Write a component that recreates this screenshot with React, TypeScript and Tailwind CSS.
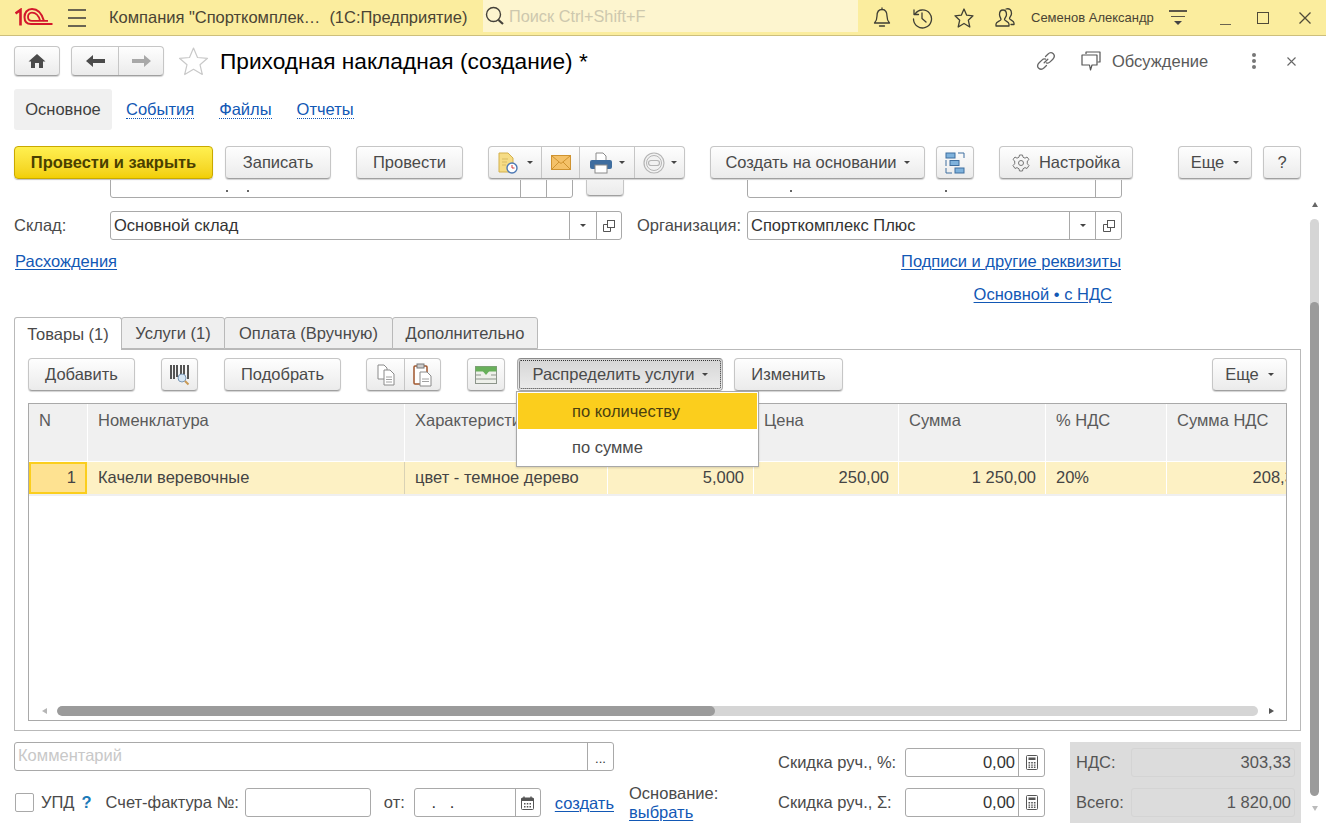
import React from "react";

const Caret = ({ className = "" }: { className?: string }) => (
  <span className={"inline-block w-0 h-0 border-x-[3px] border-x-transparent border-t-[3px] border-t-[#444] " + className} />
);

const btn =
  "flex items-center justify-center h-[33px] shrink-0 rounded-[4px] border border-[#c6c6c6] border-b-[#a0a0a0] bg-linear-to-b from-[#fefefe] to-[#ebebeb] shadow-[0_1px_1px_rgba(0,0,0,0.18)] text-[#4a4a4a] text-[16.5px]";

const Btn = ({ w, children, className = "" }: { w: string; children: React.ReactNode; className?: string }) => (
  <div className={btn + " " + w + " " + className}>{children}</div>
);

const Seg = ({ w, children, last }: { w: string; children: React.ReactNode; last?: boolean }) => (
  <div className={"flex items-center justify-center h-full " + w + (last ? "" : " border-r border-[#c6c6c6]")}>{children}</div>
);

const Link = ({ children, className = "" }: { children: React.ReactNode; className?: string }) => (
  <span className={"text-[16.5px] leading-[18px] text-[#1258b5] underline underline-offset-2 decoration-1 whitespace-nowrap " + className}>{children}</span>
);

const CopySmall = () => (
  <svg width="12" height="12" viewBox="0 0 12 12" fill="none" stroke="#555" strokeWidth="1">
    <rect x="4.5" y="0.5" width="7" height="7" />
    <path d="M4.5 4.5H0.5V11.5H7.5V7.5" />
  </svg>
);

const Calc = () => (
  <svg width="12" height="15" viewBox="0 0 12 15">
    <rect x="0.5" y="0.5" width="11" height="14" rx="1" fill="#fff" stroke="#555" />
    <rect x="2.5" y="2.5" width="7" height="2.5" fill="#555" />
    <path d="M2.5 7h1.6v1.4H2.5zM5.2 7h1.6v1.4H5.2zM7.9 7h1.6v1.4H7.9zM2.5 9.4h1.6v1.4H2.5zM5.2 9.4h1.6v1.4H5.2zM7.9 9.4h1.6v1.4H7.9zM2.5 11.6h1.6V13H2.5zM5.2 11.6h1.6V13H5.2zM7.9 11.6h1.6V13H7.9z" fill="#555" />
  </svg>
);

const Field = ({
  w,
  text,
  segs,
  align = "left",
  className = "",
}: {
  w: string;
  text?: string;
  segs?: { w: string; node: React.ReactNode }[];
  align?: "left" | "right";
  className?: string;
}) => (
  <div className={"flex h-[29px] shrink-0 bg-white rounded-[3px] border border-[#a9a9a9] " + w + " " + className}>
    <div className={"flex-1 min-w-0 px-[3px] text-[16.5px] leading-[27px] text-[#333] whitespace-nowrap " + (align === "right" ? "text-right" : "")}>{text}</div>
    {segs?.map((s, i) => (
      <div key={i} className={"flex items-center justify-center border-l border-[#a9a9a9] " + s.w}>{s.node}</div>
    ))}
  </div>
);

const Logo = () => (
  <svg width="38" height="18" viewBox="0 0 38 18" fill="none" stroke="#d3172b">
    <path d="M0.5 5.5 L5.5 2 V17.5" strokeWidth="2.6" />
    <path d="M29 13 C27 6 23 1 17 1 C12 1 9.5 5 9.5 9 C9.5 13.5 12 16 16 16 H37.5" strokeWidth="2" />
    <path d="M25 12.5 C23.5 7 21 4.6 17 4.6 C14.2 4.6 13 7 13 9 C13 11.5 14.5 12.8 17 12.8 H33" strokeWidth="1.8" />
  </svg>
);

const BarIcon = ({ children, w = 22 }: { children: React.ReactNode; w?: number }) => (
  <svg width={w} height="22" viewBox="0 0 22 22" fill="none" stroke="#3f3f35" strokeWidth="1.3" strokeLinejoin="round" strokeLinecap="round">
    {children}
  </svg>
);

const TopBar = () => (
  <div className="flex items-center h-[36px] bg-[#fbed9e] border-b border-[#cdbf7c] text-[#4a4434] shrink-0">
    <div className="ml-[15px] mt-[-2px]"><Logo /></div>
    <div className="ml-[15px] flex flex-col gap-[6px] w-[18px]">
      <div className="h-[2px] bg-[#6a6552]" />
      <div className="h-[2px] bg-[#6a6552]" />
      <div className="h-[2px] bg-[#6a6552]" />
    </div>
    <div className="ml-[23px] w-[374px] text-[16.5px] whitespace-pre tracking-[-0.02px]">Компания "Спорткомплек…  (1С:Предприятие)</div>
    <div className="flex items-center self-start h-[32px] w-[375px] bg-[#fdf5cf]">
      <svg className="ml-[2px]" width="20" height="20" viewBox="0 0 20 20" fill="none" stroke="#44413a">
        <circle cx="8.5" cy="8.5" r="7" strokeWidth="1.4" />
        <path d="M13.5 14 L18 18" strokeWidth="2.2" />
      </svg>
      <span className="ml-[4px] text-[#cdc8ae] text-[16.3px]">Поиск Ctrl+Shift+F</span>
    </div>
    <div className="ml-[13px]">
      <BarIcon><path d="M11 2.5 C7 2.5 6 6 6 9 C6 12.5 5 14.5 3.5 16 H18.5 C17 14.5 16 12.5 16 9 C16 6 15 2.5 11 2.5Z M11 1V2.5 M8.5 19 H13.5" /></BarIcon>
    </div>
    <div className="ml-[18px]">
      <BarIcon><path d="M4 7 A9 9 0 1 1 2.5 12 M3 3 V7.5 H7.5 M11 6 V11.5 L15 15" /></BarIcon>
    </div>
    <div className="ml-[20px]">
      <BarIcon><path d="M11 2 L13.7 8.2 L20 8.8 L15.3 13.2 L16.8 20 L11 16.5 L5.2 20 L6.7 13.2 L2 8.8 L8.3 8.2 Z" /></BarIcon>
    </div>
    <div className="ml-[19px]">
      <BarIcon><path d="M9 3 C6.5 3 5.5 5 5.5 7.5 C5.5 10 7 11 7 12.5 C7 14 2 14.5 2 17 V19 H15 V17 C15 14.5 10.5 14 10.5 12.5 C10.5 11 12.5 10 12.5 7.5 C12.5 5 11.5 3 9 3Z M12 2 C15.5 1 17.5 3 17.5 6.5 C17.5 9 15.5 10 15.5 11.5 C15.5 13 20 13.5 20 16 V17.5 H17" /></BarIcon>
    </div>
    <div className="ml-[15px] w-[138px] text-[13px] whitespace-nowrap">Семенов Александр</div>
    <div className="flex flex-col items-center w-[18px] gap-[4px]">
      <div className="h-[1.5px] w-[18px] bg-[#5c5646]" />
      <div className="h-[1.5px] w-[14px] bg-[#5c5646]" />
      <Caret className="border-x-[4px] border-t-[4px] border-t-[#5c5646]" />
    </div>
    <div className="ml-[33px] w-[11px] h-[1.5px] bg-[#6a6450] mt-[14px]" />
    <div className="ml-[26px] w-[12px] h-[12px] border-[1.5px] border-[#4f4a38]" />
    <svg className="ml-[30px]" width="12" height="12" viewBox="0 0 12 12" stroke="#4f4a38" strokeWidth="1.3"><path d="M0.5 0.5 L11.5 11.5 M11.5 0.5 L0.5 11.5" /></svg>
  </div>
);

const FormHeader = () => (
  <div className="flex items-center h-[30px] mt-[10px] pl-[14px] shrink-0">
    <div className={btn + " !h-[30px] w-[46px]"}>
      <svg width="18" height="16" viewBox="0 0 18 16" fill="#4b4b4b"><path d="M9 1 L17.5 8.5 H15 V15 H11 V10 H7 V15 H3 V8.5 H0.5 Z" /></svg>
    </div>
    <div className={btn + " !h-[30px] w-[93px] ml-[11px]"}>
      <Seg w="w-[47px]">
        <svg width="19" height="12" viewBox="0 0 19 12" fill="#4b4b4b"><path d="M0 6 L7 0 V4 H19 V8 H7 V12 Z" /></svg>
      </Seg>
      <Seg w="flex-1" last>
        <svg width="19" height="12" viewBox="0 0 19 12" fill="#a8a8a8"><path d="M19 6 L12 0 V4 H0 V8 H12 V12 Z" /></svg>
      </Seg>
    </div>
    <svg className="ml-[14px]" width="31" height="30" viewBox="0 0 31 30" fill="#fff" stroke="#c9c9c9" strokeWidth="1.2" strokeLinejoin="round"><path d="M15.5 2 L19.5 11.5 L29.5 12.3 L22 18.7 L24.3 28.5 L15.5 23.3 L6.7 28.5 L9 18.7 L1.5 12.3 L11.5 11.5 Z" /></svg>
    <div className="ml-[11px] mt-[1px] text-[22.7px] text-black whitespace-nowrap">Приходная накладная (создание) *</div>
    <div className="flex-1" />
    <svg width="20" height="20" viewBox="0 0 22 22" fill="none" stroke="#666" strokeWidth="1.4" strokeLinecap="round">
      <path d="M9 13 L13 9 M10.5 6 L13 3.5 C15 1.5 17.5 1.5 19 3 C20.5 4.5 20.5 7 18.5 9 L15.5 12 C14 13.5 12.5 13.5 11.5 13 M11.5 16 L9 18.5 C7 20.5 4.5 20.5 3 19 C1.5 17.5 1.5 15 3.5 13 L6.5 10 C8 8.5 9.5 8.5 10.5 9" />
    </svg>
    <svg className="ml-[25px]" width="20" height="20" viewBox="0 0 20 20" fill="none" stroke="#555" strokeWidth="1.2" strokeLinejoin="round">
      <path d="M5 3 V1 H19 V11 H16.5" />
      <path d="M1 4 H16 V14 H11 L9.5 19 L8.5 14 H1 Z" />
    </svg>
    <div className="ml-[11px] w-[96px] text-[16.5px] text-[#5a5a5a] whitespace-nowrap">Обсуждение</div>
    <div className="ml-[44px] flex flex-col gap-[2px]">
      <div className="w-[4px] h-[4px] rounded-full bg-[#777]" />
      <div className="w-[4px] h-[4px] rounded-full bg-[#777]" />
      <div className="w-[4px] h-[4px] rounded-full bg-[#777]" />
    </div>
    <svg className="ml-[31px] mr-[30px]" width="9" height="9" viewBox="0 0 9 9" stroke="#666" strokeWidth="1.1"><path d="M0.5 0.5 L8.5 8.5 M8.5 0.5 L0.5 8.5" /></svg>
  </div>
);

const PageTabs = () => (
  <div className="flex items-center h-[41px] mt-[13px] ml-[14px] text-[16.5px] shrink-0">
    <div className="flex items-center justify-center w-[98px] h-full bg-[#f0f0f0] rounded-[3px] text-[#3f3f3f]">Основное</div>
    <span className="ml-[14px] text-[#1258b5] border-b border-dotted border-[#1258b5] leading-[18px]">События</span>
    <span className="ml-[25px] text-[#1258b5] border-b border-dotted border-[#1258b5] leading-[18px]">Файлы</span>
    <span className="ml-[25px] text-[#1258b5] border-b border-dotted border-[#1258b5] leading-[18px]">Отчеты</span>
  </div>
);

const DocClock = () => (
  <svg width="24" height="22" viewBox="0 0 24 22">
    <path d="M2 1 H11 L16 6 V20 H2 Z" fill="#f6dc85" stroke="#d3b04d" />
    <path d="M5 7 H11 M5 10 H10 M5 13 H9" stroke="#d8bb62" />
    <circle cx="15" cy="16" r="5" fill="#fff" stroke="#4d79b5" strokeWidth="1.4" />
    <path d="M15 13 V16 H17.5" stroke="#d23b3b" fill="none" />
  </svg>
);

const Mail = () => (
  <svg width="20" height="15" viewBox="0 0 20 15">
    <rect x="0.5" y="0.5" width="19" height="14" fill="#f4c168" stroke="#cf9330" />
    <path d="M1 1 L10 8.5 L19 1 M1 14 L8 7 M19 14 L12 7" fill="none" stroke="#cf9330" />
  </svg>
);

const Printer = () => (
  <svg width="24" height="22" viewBox="0 0 24 22">
    <path d="M7 1 H14 L17 4 V10 H7 Z" fill="#fff" stroke="#8a8a8a" />
    <rect x="1" y="8" width="22" height="9" rx="2" fill="#3f6d9f" />
    <rect x="6" y="13" width="12" height="8" fill="#fff" stroke="#8a8a8a" />
  </svg>
);

const Stamp = () => (
  <svg width="22" height="22" viewBox="0 0 22 22" fill="none" stroke="#b5b5b5">
    <circle cx="11" cy="11" r="10" fill="#f2f2f2" strokeWidth="1.2" />
    <circle cx="11" cy="11" r="7.5" />
    <rect x="5.5" y="8.5" width="11" height="5" rx="2.5" strokeWidth="1.2" />
  </svg>
);

const Structure = () => (
  <svg width="20" height="22" viewBox="0 0 20 22" fill="none">
    <rect x="1" y="1" width="9" height="5" fill="#7fb2dc" stroke="#3f6f9f" />
    <rect x="5" y="8.5" width="9" height="5" fill="#7fb2dc" stroke="#3f6f9f" />
    <rect x="10" y="16" width="9" height="5" fill="#7fb2dc" stroke="#3f6f9f" />
    <path d="M13 1 H19 V6 M1 16 V21 H7 M1 8 V14" stroke="#3f6f9f" />
  </svg>
);

const Gear = () => (
  <svg width="18" height="18" viewBox="0 0 18 18" fill="none" stroke="#777" strokeWidth="1">
    <path d="M7.5 1 H10.5 L11 3.2 L13 4.2 L15 3 L17 5.5 L15.3 7 V9.8 L17 11.5 L15 14.5 L13 13.6 L11 14.8 L10.5 17 H7.5 L7 14.8 L5 13.6 L3 14.5 L1 11.5 L2.7 9.8 V7 L1 5.5 L3 3 L5 4.2 L7 3.2 Z" strokeLinejoin="round" />
    <circle cx="9" cy="9" r="2.5" />
  </svg>
);

const CommandBar = () => (
  <div className="flex items-center h-[33px] mt-[16px] ml-[14px] shrink-0">
    <div className="flex items-center justify-center w-[199px] h-[33px] rounded-[4px] border border-[#c9a900] bg-linear-to-b from-[#fff04f] to-[#f2cf00] shadow-[0_1px_1px_rgba(0,0,0,0.25)] text-[16.5px] font-bold text-[#4a4000] whitespace-nowrap">
      Провести и закрыть
    </div>
    <Btn w="w-[106px]" className="ml-[12px]">Записать</Btn>
    <Btn w="w-[107px]" className="ml-[25px]">Провести</Btn>
    <div className={btn + " w-[197px] ml-[25px]"}>
      <Seg w="w-[53px] gap-[6px]"><DocClock /><Caret /></Seg>
      <Seg w="w-[38px]"><Mail /></Seg>
      <Seg w="w-[55px] gap-[6px]"><Printer /><Caret /></Seg>
      <Seg w="flex-1 gap-[6px]" last><Stamp /><Caret /></Seg>
    </div>
    <Btn w="w-[215px] gap-[7px]" className="ml-[25px] whitespace-nowrap">Создать на основании <Caret /></Btn>
    <Btn w="w-[38px]" className="ml-[11px]"><Structure /></Btn>
    <Btn w="w-[134px] gap-[9px]" className="ml-[25px]"><Gear />Настройка</Btn>
    <Btn w="w-[74px] gap-[9px]" className="ml-[45px]">Еще <Caret /></Btn>
    <Btn w="w-[38px]" className="ml-[11px]">?</Btn>
  </div>
);

const Barcode = () => (
  <svg width="20" height="22" viewBox="0 0 20 22" fill="none">
    <path d="M1 1 V15 M4 1 V15 M7 1 V13 M11 1 V11 M14 1 V11 M18 1 V15" stroke="#555" strokeWidth="2" />
    <circle cx="12" cy="14" r="4" fill="#d6e6f4" stroke="#7b98b5" />
    <path d="M15 17 L18.5 20.5" stroke="#c99a55" strokeWidth="2" />
  </svg>
);

const Copy = () => (
  <svg width="20" height="22" viewBox="0 0 20 22" fill="#fff" stroke="#8a8a8a">
    <path d="M2 1 H8 L11 4 V15 H2 Z" />
    <path d="M8 6 H14 L18 10 V21 H8 Z" />
    <path d="M10 13 H16 M10 15.5 H16 M10 18 H16" strokeWidth="0.8" />
  </svg>
);

const Paste = () => (
  <svg width="20" height="24" viewBox="0 0 20 24" fill="none">
    <rect x="1" y="3" width="13" height="18" rx="1" fill="#fff" stroke="#a0562c" strokeWidth="1.5" />
    <rect x="4" y="1" width="7" height="4" fill="#ccc" stroke="#777" />
    <path d="M7 9 H14 L18 13 V23 H7 Z" fill="#fff" stroke="#8a8a8a" />
    <path d="M9 16 H16 M9 18.5 H16" stroke="#8a8a8a" strokeWidth="0.8" />
  </svg>
);

const Distribute = () => (
  <svg width="22" height="18" viewBox="0 0 22 18">
    <rect x="0.5" y="0.5" width="21" height="17" fill="#eef0ea" stroke="#8d958b" />
    <rect x="0.5" y="0.5" width="21" height="5" fill="#68b05a" />
    <path d="M6 3 H16 L11 9 Z" fill="#68b05a" />
    <path d="M1 9 H6 M16 9 H21 M1 13 H21" stroke="#8d958b" />
  </svg>
);

const Toolbar = () => (
  <div className="flex items-center h-[33px] mt-[8px]">
    <Btn w="w-[107px]">Добавить</Btn>
    <Btn w="w-[37px]" className="ml-[26px]"><Barcode /></Btn>
    <Btn w="w-[117px]" className="ml-[26px]">Подобрать</Btn>
    <div className={btn + " w-[75px] ml-[25px]"}>
      <Seg w="w-[38px]"><Copy /></Seg>
      <Seg w="flex-1" last><Paste /></Seg>
    </div>
    <Btn w="w-[38px]" className="ml-[26px]"><Distribute /></Btn>
    <div className="relative ml-[12px]">
      <div className="flex items-center justify-center gap-[7px] w-[206px] h-[33px] rounded-[4px] border border-[#a8a8a8] border-t-[#8a8a8a] bg-linear-to-b from-[#d5d5d5] to-[#ececec] text-[16.5px] text-[#4a4a4a] whitespace-nowrap outline-1 outline-dotted outline-offset-[-3px] outline-[#333]">
        Распределить услуги <Caret />
      </div>
      <div className="absolute z-10 top-[33px] left-[-1px] w-[243px] h-[76px] bg-white border border-[#a8a8a8] p-[1px] shadow-[0_1px_2px_rgba(0,0,0,0.15)] text-[16.5px] text-[#4a4a4a]">
        <div className="flex items-center h-[36px] pl-[54px] bg-[#fbce1d] text-[#4a3f10]">по количеству</div>
        <div className="flex items-center h-[37px] pl-[54px]">по сумме</div>
      </div>
    </div>
    <Btn w="w-[109px]" className="ml-[11px]">Изменить</Btn>
    <div className="flex-1" />
    <Btn w="w-[75px] gap-[9px]">Еще <Caret /></Btn>
  </div>
);

const cols = [
  { w: "w-[59px]", h: "N" },
  { w: "w-[317px]", h: "Номенклатура" },
  { w: "w-[203px]", h: "Характеристика" },
  { w: "w-[146px]", h: "" },
  { w: "w-[145px]", h: "Цена" },
  { w: "w-[147px]", h: "Сумма" },
  { w: "w-[121px]", h: "% НДС" },
  { w: "w-[121px]", h: "Сумма НДС" },
];

const Table = () => (
  <div className="mt-[12px] h-[318px] border border-[#a9a9a9] flex flex-col overflow-hidden">
    <div className="flex h-[58px] shrink-0 border-b border-white">
      {cols.map((c, i) => (
        <div key={i} className={"shrink-0 h-[57px] bg-[#f0f0f0] border-r border-white px-[10px] pt-[4px] text-[16.5px] text-[#5a5a5a] whitespace-nowrap overflow-hidden " + c.w}>{c.h}</div>
      ))}
    </div>
    <div className="flex h-[32px] shrink-0 bg-[#fdf1c4] text-[16.5px] text-[#444] leading-[30px]">
      <div className="shrink-0 w-[58px] mr-[1px] border-2 border-[#fbce1d] bg-[#fee291] text-right pr-[9px] leading-[27px]">1</div>
      <div className="shrink-0 w-[317px] border-r border-[#d9d2b5] pl-[10px] pr-[10px]">Качели веревочные</div>
      <div className="shrink-0 w-[203px] border-r border-white pl-[10px] whitespace-nowrap">цвет - темное дерево</div>
      <div className="shrink-0 w-[146px] border-r border-white text-right pr-[9px]">5,000</div>
      <div className="shrink-0 w-[145px] border-r border-white text-right pr-[9px]">250,00</div>
      <div className="shrink-0 w-[147px] border-r border-white text-right pr-[9px]">1 250,00</div>
      <div className="shrink-0 w-[121px] border-r border-white pl-[10px]">20%</div>
      <div className="shrink-0 w-[136px] text-right whitespace-nowrap">208,33</div>
    </div>
    <div className="flex-1 border-t-2 border-[#efefef]" />
    <div className="flex items-center h-[10px] mb-[4px] shrink-0">
      <Tri dir="l" className="ml-[13px]" />
      <div className="ml-[10px] flex-1 flex h-full rounded-full overflow-hidden bg-[#d5d5d5]">
        <div className="w-[658px] bg-[#9b9b9b] rounded-full" />
      </div>
      <Tri dir="r" className="ml-[11px] mr-[12px]" />
    </div>
  </div>
);

function Tri({ dir, className = "" }: { dir: "l" | "r"; className?: string }) {
  return (
    <svg className={className} width="5" height="6" viewBox="0 0 5 6" fill={dir === "l" ? "#b5b5b5" : "#555"}>
      {dir === "l" ? <path d="M0 3 L5 0 V6 Z" /> : <path d="M5 3 L0 0 V6 Z" />}
    </svg>
  );
}

const TabsBlock = () => {
  const tab = "flex items-center justify-center h-[32px] border border-[#b9b9b9] rounded-t-[3px] text-[16.5px] text-[#4a4a4a] whitespace-nowrap";
  return (
    <>
      <div className="flex mt-[14px] h-[32px]">
        <div className={tab + " w-[108px] bg-white border-b-0 relative z-[1] !h-[33px]"}>Товары (1)</div>
        <div className={tab + " w-[104px] bg-[#efefef] -ml-px"}>Услуги (1)</div>
        <div className={tab + " w-[169px] bg-[#efefef] -ml-px"}>Оплата (Вручную)</div>
        <div className={tab + " w-[146px] bg-[#efefef] -ml-px"}>Дополнительно</div>
      </div>
      <div className="h-[382px] border border-[#b9b9b9] px-[13px]">
        <Toolbar />
        <Table />
      </div>
    </>
  );
};

const Label = ({ children, className = "" }: { children: React.ReactNode; className?: string }) => (
  <span className={"text-[16.5px] text-[#4a4a4a] whitespace-nowrap " + className}>{children}</span>
);

const Footer = () => (
  <div className="flex mt-[11px] h-[81px]">
    <div className="w-[764px] shrink-0">
      <div className="flex h-[29px] w-[600px] bg-white rounded-[3px] border border-[#a9a9a9]">
        <div className="flex-1 px-[3px] text-[16.5px] leading-[25px] text-[#c8c8c8]">Комментарий</div>
        <div className="flex items-end justify-center pb-[7px] w-[26px] border-l border-[#a9a9a9] text-[13px] leading-[8px] text-[#333]">...</div>
      </div>
      <div className="flex items-center h-[29px] mt-[17px]">
        <div className="w-[19px] h-[19px] ml-[1px] rounded-[2px] border border-[#a9a9a9] bg-white shrink-0" />
        <Label className="ml-[7px]">УПД</Label>
        <span className="ml-[7px] text-[16.5px] text-[#1c7ab8] font-bold">?</span>
        <Label className="ml-[14px]">Счет-фактура №:</Label>
        <Field w="w-[126px] ml-[6px]" />
        <Label className="ml-[13px]">от:</Label>
        <Field w="w-[127px] ml-[9px]" text={"\u00A0\u00A0\u00A0.\u00A0\u00A0\u00A0."} segs={[{ w: "w-[25px]", node: <DateIcon /> }]} />
        <Link className="ml-[14px]">создать</Link>
        <div className="ml-[15px] flex flex-col">
          <Label className="leading-[19px]">Основание:</Label>
          <Link className="self-start">выбрать</Link>
        </div>
      </div>
    </div>
    <div className="w-[267px] shrink-0 pt-[6px] flex flex-col gap-[11px]">
      <div className="flex items-center justify-between">
        <Label>Скидка руч., %:</Label>
        <Field w="w-[140px]" align="right" text="0,00" segs={[{ w: "w-[26px]", node: <Calc /> }]} />
      </div>
      <div className="flex items-center justify-between">
        <Label>Скидка руч., Σ:</Label>
        <Field w="w-[140px]" align="right" text="0,00" segs={[{ w: "w-[26px]", node: <Calc /> }]} />
      </div>
    </div>
    <div className="ml-[25px] w-[231px] h-[81px] bg-[#dcdcdc] pt-[6px] pl-[6px] pr-[6px] flex flex-col gap-[11px]">
      {[["НДС:", "303,33"], ["Всего:", "1 820,00"]].map(([l, v]) => (
        <div key={l} className="flex items-center justify-between h-[29px]">
          <Label className="text-[#555]">{l}</Label>
          <div className="w-[164px] h-[29px] border border-[#d4d4d4] rounded-[3px] text-right pr-[3px] text-[16.5px] leading-[27px] text-[#555]">{v}</div>
        </div>
      ))}
    </div>
  </div>
);

function DateIcon() {
  return (
    <svg width="13" height="14" viewBox="0 0 13 14">
      <rect x="0.5" y="2" width="12" height="11.5" rx="1" fill="#fff" stroke="#555" />
      <rect x="0.5" y="2" width="12" height="3" fill="#555" />
      <path d="M3 0.5 V3 M10 0.5 V3" stroke="#555" strokeWidth="1.4" />
      <path d="M3 7h1.5v1.5H3zM5.8 7h1.5v1.5H5.8zM8.5 7h1.5v1.5H8.5zM3 10h1.5v1.5H3zM5.8 10h1.5v1.5H5.8zM8.5 10h1.5v1.5H8.5z" fill="#555" />
    </svg>
  );
}

const ClippedRow = () => (
  <div className="flex items-end h-[18px] overflow-hidden shrink-0">
    <div className="flex w-[463px] h-[29px] ml-[96px] shrink-0 border border-[#a9a9a9] rounded-[3px]">
      <div className="flex-1 flex items-end gap-[19px] pl-[115px] pb-[5px]">
        <span className="w-[2px] h-[2px] bg-[#666]" />
        <span className="w-[2px] h-[2px] bg-[#666]" />
      </div>
      <div className="w-[26px] border-l border-[#a9a9a9]" />
      <div className="w-[26px] border-l border-[#a9a9a9]" />
    </div>
    <div className={btn + " w-[38px] ml-[13px] mb-[2px]"} />
    <div className="flex w-[375px] h-[29px] ml-[123px] shrink-0 border border-[#a9a9a9] rounded-[3px]">
      <div className="flex-1 flex items-end gap-[153px] pl-[42px] pb-[5px]">
        <span className="w-[2px] h-[2px] bg-[#666]" />
        <span className="w-[2px] h-[2px] bg-[#666]" />
      </div>
      <div className="w-[26px] border-l border-[#a9a9a9]" />
    </div>
  </div>
);

const Body = () => (
  <div className="flex flex-1 min-h-0">
    <div className="w-[1301px] pl-[14px] shrink-0 overflow-hidden">
      <ClippedRow />
      <div className="flex items-center mt-[13px] h-[29px]">
        <Label className="w-[96px]">Склад:</Label>
        <Field
          w="w-[512px]"
          text="Основной склад"
          segs={[
            { w: "w-[27px]", node: <Caret /> },
            { w: "w-[25px]", node: <CopySmall /> },
          ]}
        />
        <Label className="ml-[15px] w-[110px]">Организация:</Label>
        <Field
          w="w-[375px]"
          text="Спорткомплекс Плюс"
          segs={[
            { w: "w-[26px]", node: <Caret /> },
            { w: "w-[26px]", node: <CopySmall /> },
          ]}
        />
      </div>
      <div className="flex justify-between mt-[12px] pl-[1px] pr-[180px] h-[18px]">
        <Link>Расхождения</Link>
        <Link>Подписи и другие реквизиты</Link>
      </div>
      <div className="flex justify-end mt-[15px] pr-[189px] h-[18px]">
        <Link>Основной • с НДС</Link>
      </div>
      <TabsBlock />
      <Footer />
    </div>
    <div className="w-[25px] shrink-0 pl-[9px] flex flex-col">
      <svg className="mt-[22px] ml-[2px]" width="6" height="5" viewBox="0 0 6 5" fill="#666"><path d="M3 0 L6 5 H0 Z" /></svg>
      <div className="mt-[12px] w-[9px] h-[577px] rounded-full bg-[#d5d5d5] overflow-hidden flex flex-col">
        <div className="h-[83px] shrink-0" />
        <div className="flex-1 bg-[#9b9b9b] rounded-full" />
      </div>
      <svg className="mt-[10px] ml-[2px]" width="6" height="5" viewBox="0 0 6 5" fill="#bbb"><path d="M3 5 L6 0 H0 Z" /></svg>
    </div>
  </div>
);

export default function App() {
  return (
    <div className="flex flex-col w-[1326px] h-[839px] overflow-hidden bg-white font-['Liberation_Sans',Arial,sans-serif]">
      <TopBar />
      <FormHeader />
      <PageTabs />
      <CommandBar />
      <div className="h-px shrink-0" />
      <Body />
    </div>
  );
}
